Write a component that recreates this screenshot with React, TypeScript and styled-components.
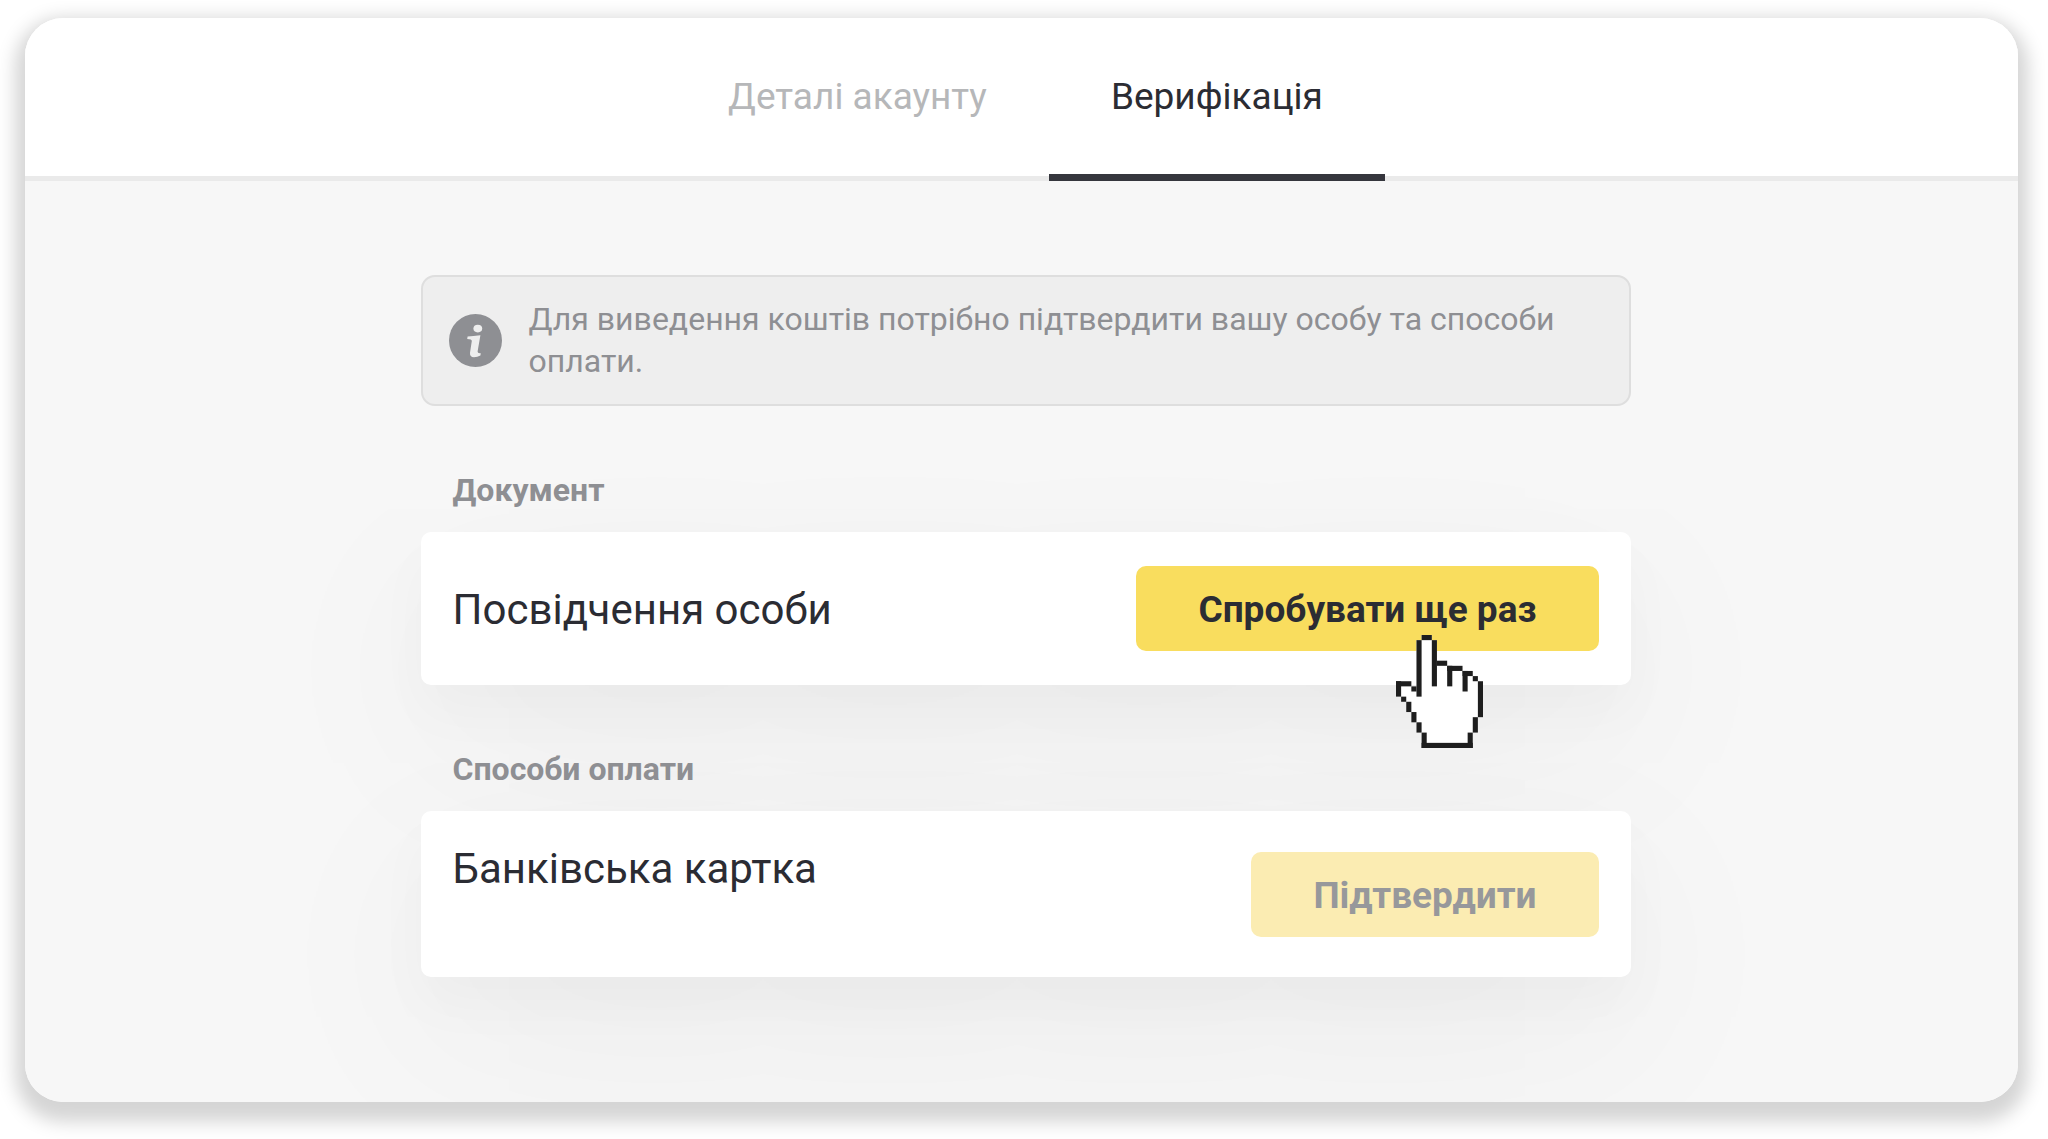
import React from "react";
import styled, { createGlobalStyle } from "styled-components";

const GlobalStyle = createGlobalStyle`
  *, *::before, *::after {
    box-sizing: border-box;
  }
  body {
    margin: 0;
    background: #ffffff;
    color: #2b2c33;
    font-family: Roboto, "Noto Sans", sans-serif;
  }
`;

const Page = styled.div`
  padding: 18px 30px 37px 25px;
`;

const Window = styled.main`
  overflow: hidden;
  border-radius: 38px;
  background: #f7f7f7;
`;

const WindowShadow = styled.div`
  border-radius: 38px;
  box-shadow: 0 10px 18px 10px rgba(0, 0, 0, 0.17);
`;

const Tabs = styled.nav`
  display: flex;
  justify-content: center;
  padding-left: 8px;
  background: #ffffff;
  border-bottom: 5px solid #eaeaea;
`;

const Tab = styled.a<{ $active?: boolean }>`
  margin-bottom: -5px;
  padding: 57px 62px 55px;
  border-bottom: 7px solid ${(p) => (p.$active ? "#35363d" : "transparent")};
  color: ${(p) => (p.$active ? "#2b2c33" : "#b6b7b9")};
  font-size: 37px;
  line-height: 44px;
  text-decoration: none;
`;

const Content = styled.div`
  display: flex;
  justify-content: center;
  padding: 94px 0 125px 8px;
`;

const Column = styled.div`
  width: 100%;
  max-width: 1210px;
`;

const Notice = styled.div`
  display: flex;
  align-items: center;
  gap: 27px;
  padding: 21px 26px 22px;
  border: 2px solid #dedede;
  border-radius: 14px;
  background: #eeeeee;
  color: #8e8f93;
`;

const NoticeText = styled.p`
  margin: 0;
  font-size: 32px;
  line-height: 42px;
`;

const NoticeIcon = styled.svg`
  flex: none;
  width: 53px;
  height: 53px;
`;

const Section = styled.section`
  margin-top: 64px;
`;

const SectionTitle = styled.h2`
  margin: 0 32px 22px;
  color: #8e8f93;
  font-size: 32px;
  font-weight: 700;
  line-height: 40px;
`;

const Card = styled.div`
  display: flex;
  justify-content: space-between;
  align-items: center;
  padding: 34px 32px;
  border-radius: 10px;
  background: #ffffff;
  box-shadow:
    0 28px 56px rgba(0, 0, 0, 0.026),
    0 60px 200px rgba(0, 0, 0, 0.05);
`;

const CardBody = styled.div<{ $tall?: boolean }>`
  min-height: ${(p) => (p.$tall ? "98px" : "0")};
`;

const CardTitle = styled.h3`
  margin: 0;
  padding-top: 2px;
  font-size: 42px;
  font-weight: 400;
  line-height: 44px;
`;

const Action = styled.div`
  position: relative;
`;

const Button = styled.button`
  display: block;
  padding: 22px 62px 19px;
  border: 0;
  border-radius: 10px;
  background: #f9dd5e;
  color: #2b2c33;
  font-family: inherit;
  font-size: 37px;
  font-weight: 700;
  line-height: 44px;
  cursor: pointer;

  &:disabled {
    background: #fbecb2;
    color: #97989b;
    cursor: default;
  }
`;

const Pointer = styled.svg`
  position: absolute;
  top: 69px;
  right: 116px;
  width: 87px;
  height: 113px;
  pointer-events: none;
`;

/* Outline cells of the hand on a 17 by 22 grid: x, y, width, height */
const handCells = [
  [5, 0, 2, 1],
  [4, 1, 1, 11],
  [7, 1, 1, 9],
  [8, 5, 2, 1],
  [10, 6, 3, 1],
  [10, 6, 1, 4],
  [13, 7, 2, 1],
  [13, 7, 1, 4],
  [15, 8, 1, 1],
  [16, 9, 1, 7],
  [15, 16, 1, 3],
  [14, 19, 1, 3],
  [5, 21, 10, 1],
  [5, 19, 1, 3],
  [4, 17, 1, 2],
  [3, 15, 1, 2],
  [2, 13, 1, 2],
  [1, 12, 1, 1],
  [0, 9, 1, 3],
  [0, 9, 3, 1],
  [3, 10, 1, 1],
];

function HandPointer() {
  return (
    <Pointer viewBox="0 0 17 22" preserveAspectRatio="none" aria-hidden="true">
      <path
        fill="#ffffff"
        d="M5 0H7V1H8V5H10V6H13V7H15V8H16V9H17V16H16V19H15V22H5V19H4V17H3V15H2V13H1V12H0V9H3V10H4V1H5Z"
      />
      {handCells.map(([x, y, w, h], i) => (
        <rect key={i} x={x} y={y} width={w} height={h} fill="#1e1e1e" />
      ))}
    </Pointer>
  );
}

function InfoIcon() {
  return (
    <NoticeIcon viewBox="0 0 53 53" aria-hidden="true">
      <circle cx="26.5" cy="26.5" r="26.5" fill="#8e8f93" />
      <ellipse cx="28.8" cy="14.6" rx="4.4" ry="3.8" fill="#eeeeee" />
      <path
        d="M18.600 22.400Q24 22.200 31.400 21.200L28.600 37.600Q28.400 39.600 31.800 39.200L31.400 41.600Q28.500 43.200 25 43.200Q20.600 43.200 21 38.800L22.800 27Q23 25 18.200 25Z"
        fill="#eeeeee"
      />
    </NoticeIcon>
  );
}

export default function App() {
  return (
    <>
      <GlobalStyle />
      <Page>
        <WindowShadow>
          <Window>
            <Tabs>
              <Tab href="#details">Деталі акаунту</Tab>
              <Tab href="#verification" $active aria-current="page">
                Верифікація
              </Tab>
            </Tabs>
            <Content>
              <Column>
                <Notice>
                  <InfoIcon />
                  <NoticeText>
                    Для виведення коштів потрібно підтвердити вашу особу та
                    способи оплати.
                  </NoticeText>
                </Notice>
                <Section>
                  <SectionTitle>Документ</SectionTitle>
                  <Card>
                    <CardBody>
                      <CardTitle>Посвідчення особи</CardTitle>
                    </CardBody>
                    <Action>
                      <Button type="button">Спробувати ще раз</Button>
                      <HandPointer />
                    </Action>
                  </Card>
                </Section>
                <Section>
                  <SectionTitle>Способи оплати</SectionTitle>
                  <Card>
                    <CardBody $tall>
                      <CardTitle>Банківська картка</CardTitle>
                    </CardBody>
                    <Action>
                      <Button type="button" disabled>
                        Підтвердити
                      </Button>
                    </Action>
                  </Card>
                </Section>
              </Column>
            </Content>
          </Window>
        </WindowShadow>
      </Page>
    </>
  );
}
